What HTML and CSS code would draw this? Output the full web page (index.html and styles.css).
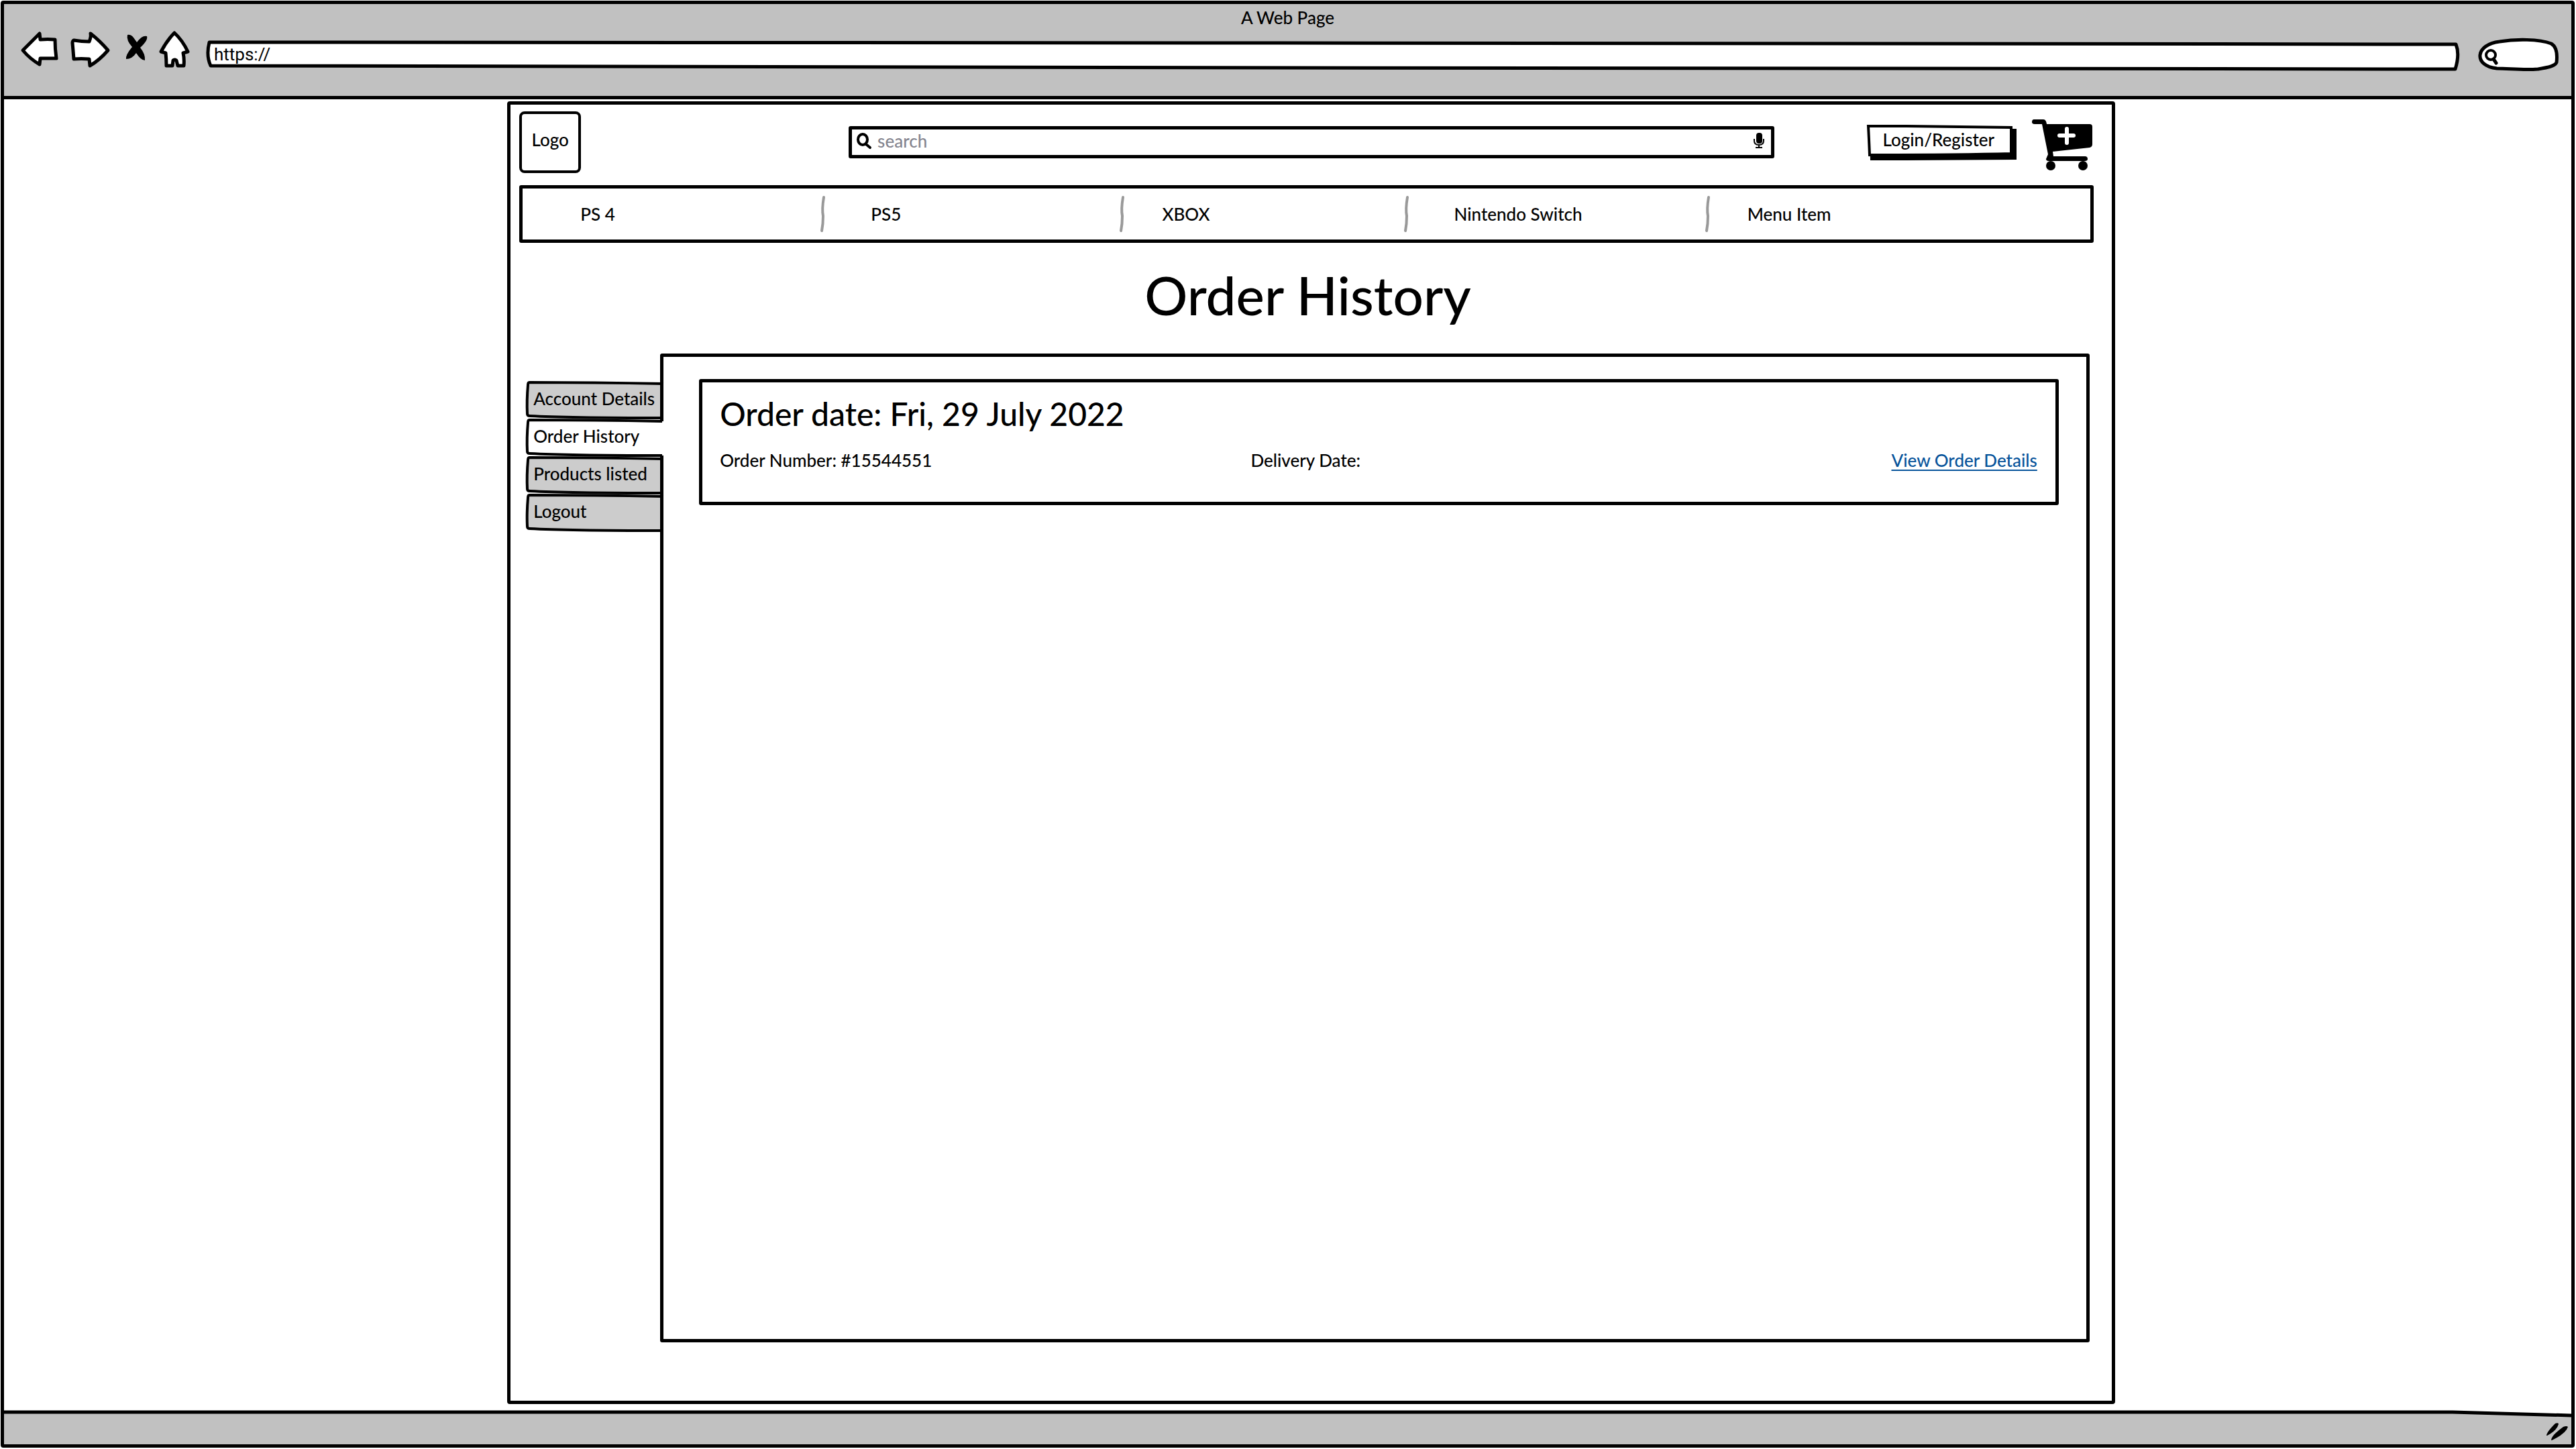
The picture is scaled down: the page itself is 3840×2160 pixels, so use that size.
FILE: index.html
```html
<!DOCTYPE html>
<html lang="en">
<head>
<meta charset="utf-8">
<title>Order History</title>
<meta name="viewport" content="width=device-width, initial-scale=1">
<link rel="stylesheet" href="styles.css">
</head>
<body>
<div class="browser">
  <header class="chrome">
    <p class="chrome-title">A Web Page</p>
    <div class="toolbar">
      <button class="tool" type="button" aria-label="Back">
        <svg width="62" height="62" viewBox="30 43 62 62"><path class="ink paper" d="M34 75 L59 50 L60 59 Q71 58 82 59 Q82 73 84 87 Q72 87 60 87 L59 96 Q45 88 34 75Z"/></svg>
      </button>
      <button class="tool" type="button" aria-label="Forward">
        <svg width="68" height="62" viewBox="104 43 68 62"><path class="ink paper" d="M110 60 Q122 62 133 62 Q136 55 135 50 Q149 61 161 75 Q148 90 134 98 L133 88 Q121 87 110 88 Q109 75 108 64 Q108 61 110 60Z"/></svg>
      </button>
      <button class="tool" type="button" aria-label="Stop">
        <svg width="40" height="62" viewBox="184 43 40 62"><path d="M190 52 Q195 51 199 56 L204 63 Q212 52 219 54 Q221 60 209 71 Q217 81 216 90 Q210 90 203 79 Q197 88 188 88 Q187 82 197 70 Q188 60 190 52Z"/></svg>
      </button>
      <button class="tool" type="button" aria-label="Home">
        <svg width="48" height="62" viewBox="236 43 48 62"><path class="ink paper" d="M260 49 Q272 60 280 77 L273 79 Q275 88 274 98 L265 98 L263 90 Q260 88 258 90 L257 98 L248 98 Q248 88 247 79 L240 77 Q249 60 260 49Z"/></svg>
      </button>
      <div class="address">
        <svg class="outline" viewBox="0 0 3358 46" preserveAspectRatio="none" aria-hidden="true"><path class="ink paper" d="M5 4 L1600 5 L3354 7 Q3360 22 3353 44 L1600 42 L7 39 Q0 24 5 4Z"/></svg>
        <input class="address-input" type="text" aria-label="Address" value="https://">
      </div>
      <button class="tool tool-search" type="button" aria-label="Search the web">
        <svg width="124" height="62" viewBox="3692 43 124 62"><path class="ink paper" d="M3722 102 C3686 98 3690 66 3726 62 C3750 58 3785 58 3803 65 C3812 70 3812 84 3811 93 C3809 99 3795 101 3783 103 C3762 105 3740 102 3722 102Z"/><circle class="ink thin" cx="3713" cy="82" r="7"/><path class="ink" d="M3717 88 L3721 94"/></svg>
      </button>
    </div>
  </header>

  <main class="viewport">
    <div class="page">
      <header class="site-header">
        <a class="logo" href="#">Logo</a>
        <form class="search" role="search">
          <svg class="search-icon" width="24" height="26" viewBox="0 0 24 26" aria-hidden="true"><ellipse cx="10" cy="11" rx="7" ry="8"/><path d="M15 18 L21 23"/></svg>
          <input class="search-input" type="search" placeholder="search" aria-label="search">
          <svg class="mic-icon" width="16" height="24" viewBox="0 0 16 24" aria-hidden="true"><rect x="4" y="0" width="9" height="16" rx="4"/><path d="M1 9 V12 Q1 18 8 18 Q15 18 15 12 V9 M8 18 V22 M3 22 H13"/></svg>
        </form>
        <button class="login" type="button">
          <svg class="outline" viewBox="0 0 224 52" preserveAspectRatio="none" aria-hidden="true"><path d="M5 6 H224 V52 L60 53 L6 53Z"/><path class="ink paper login-face" d="M3 2 L60 2 L216 4 L216 43 Q140 45 5 45 Q4 20 3 2Z"/></svg>
          <span class="login-label">Login/Register</span>
        </button>
        <a class="cart" href="#" aria-label="Shopping cart">
          <svg width="92" height="92" viewBox="3029 166 92 92"><path d="M3032 178 H3046 Q3050 178 3051 185 L3115 185 Q3119 185 3119 189 V215 Q3119 219 3115 220 L3060 226 L3061 233 H3108 Q3112 233 3112 237 Q3112 240 3108 240 H3054 Q3050 240 3050 237 L3053 230 L3044 185 H3033 Q3029 185 3029 182 Q3029 178 3032 178Z"/><circle cx="3057" cy="247" r="7"/><circle cx="3105" cy="247" r="7"/><path class="cart-plus" d="M3081 192 V213 M3070 202 H3091"/></svg>
        </a>
      </header>

      <nav aria-label="Shop">
        <ul class="menu">
          <li class="menu-item"><a class="menu-link" href="#">PS 4</a></li>
          <li class="menu-item"><svg class="divider" width="8" height="54" viewBox="0 0 8 54" aria-hidden="true"><path d="M6 2 Q3 20 5 30 Q5 42 3 52"/></svg><a class="menu-link" href="#">PS5</a></li>
          <li class="menu-item"><svg class="divider" width="8" height="54" viewBox="0 0 8 54" aria-hidden="true"><path d="M6 2 Q3 20 5 30 Q5 42 3 52"/></svg><a class="menu-link" href="#">XBOX</a></li>
          <li class="menu-item"><svg class="divider" width="8" height="54" viewBox="0 0 8 54" aria-hidden="true"><path d="M6 2 Q3 20 5 30 Q5 42 3 52"/></svg><a class="menu-link" href="#">Nintendo Switch</a></li>
          <li class="menu-item"><svg class="divider" width="8" height="54" viewBox="0 0 8 54" aria-hidden="true"><path d="M6 2 Q3 20 5 30 Q5 42 3 52"/></svg><a class="menu-link" href="#">Menu Item</a></li>
        </ul>
      </nav>

      <h1 class="title">Order History</h1>

      <div class="account">
        <nav aria-label="Account">
          <ul class="tabs">
            <li class="tab"><svg class="outline" viewBox="0 0 205 56" preserveAspectRatio="none" aria-hidden="true"><path d="M205 3 Q100 1 5 1 Q3 1 3 5 Q1 28 2 48 Q2 51 6 51 Q60 54 205 54"/></svg><a class="tab-link" href="#">Account Details</a></li>
            <li class="tab tab-active"><svg class="outline" viewBox="0 0 205 56" preserveAspectRatio="none" aria-hidden="true"><path class="tab-gap" d="M190 3 H206 V54 H190Z"/><path d="M203 3 Q100 1 5 1 Q3 1 3 5 Q1 28 2 48 Q2 51 6 51 Q60 54 203 54"/></svg><a class="tab-link" href="#" aria-current="page">Order History</a></li>
            <li class="tab"><svg class="outline" viewBox="0 0 205 56" preserveAspectRatio="none" aria-hidden="true"><path d="M205 3 Q100 1 5 1 Q3 1 3 5 Q1 28 2 48 Q2 51 6 51 Q60 54 205 54"/></svg><a class="tab-link" href="#">Products listed</a></li>
            <li class="tab"><svg class="outline" viewBox="0 0 205 56" preserveAspectRatio="none" aria-hidden="true"><path d="M205 3 Q100 1 5 1 Q3 1 3 5 Q1 28 2 48 Q2 51 6 51 Q60 54 205 54"/></svg><a class="tab-link" href="#">Logout</a></li>
          </ul>
        </nav>
        <section class="panel">
          <article class="order">
            <h2 class="order-date">Order date: Fri, 29 July 2022</h2>
            <div class="order-meta">
              <p>Order Number: #15544551</p>
              <p>Delivery Date:</p>
              <a class="order-link" href="#">View Order Details</a>
            </div>
          </article>
        </section>
      </div>
    </div>
  </main>

  <footer class="status">
    <svg class="outline" viewBox="0 0 3827 51" preserveAspectRatio="none" aria-hidden="true"><path class="status-fill" d="M0 2 L3650 2 L3827 7 V51 H0Z"/><path class="ink" d="M0 3 L1800 3 L3650 3 L3827 8"/></svg>
    <svg class="grip" width="34" height="28" viewBox="3796 2121 34 28" aria-hidden="true"><path d="M3797 2141 Q3797 2136 3810 2123 Q3815 2121 3815 2124 Q3812 2134 3798 2141Z"/><path d="M3804 2148 Q3804 2141 3822 2128 Q3827 2126 3829 2128 Q3826 2138 3805 2148Z"/></svg>
  </footer>
</div>
</body>
</html>
```
FILE: styles.css
```css
* {
  box-sizing: border-box;
}

body {
  margin: 0;
  background: #fff;
  color: #000;
  font: 500 26px/32px Lato, "Open Sans", sans-serif;
}

h1,
h2,
p,
ul {
  margin: 0;
  padding: 0;
  font-weight: 500;
}

ul {
  list-style: none;
}

a {
  color: inherit;
  text-decoration: none;
}

button,
input {
  margin: 0;
  padding: 0;
  border: 0;
  background: none;
  color: inherit;
  font: inherit;
}

svg {
  display: block;
  flex: none;
  overflow: visible;
}

/* hand-drawn strokes */
.ink {
  fill: none;
  stroke: #000;
  stroke-width: 5;
  stroke-linejoin: round;
  stroke-linecap: round;
}

.ink.thin {
  stroke-width: 4;
}

.ink.paper {
  fill: #fff;
}

.outline {
  position: absolute;
  inset: 0;
  width: 100%;
  height: 100%;
}

/* browser window */
.browser {
  display: flex;
  flex-direction: column;
  min-height: calc(100vh - 3px);
  margin: 1px 2px 2px 1px;
  border: 5px solid #000;
  border-radius: 4px;
}

.chrome {
  padding: 3px 0 38px;
  border-bottom: 5px solid #000;
  background: #c1c1c1;
}

.chrome-title {
  line-height: 34px;
  text-align: center;
}

.toolbar {
  display: flex;
  align-items: flex-end;
  gap: 12px;
  padding: 0 17px 0 24px;
}

.address {
  position: relative;
  flex: 1;
  height: 46px;
  margin: 0 15px 0 11px;
}

.address-input {
  position: relative;
  display: block;
  width: 100%;
  height: 42px;
  padding: 2px 12px 0;
  font: 400 26px/32px Roboto, sans-serif;
}

/* page frame */
.viewport {
  flex: 1;
  display: grid;
  grid-template-columns: 750fr 2396fr 680fr;
  padding: 3px 0 9px;
}

.page {
  grid-column: 2;
  display: flex;
  flex-direction: column;
  padding: 10px 27px 87px 13px;
  border: 5px solid #000;
  border-radius: 4px;
}

.site-header {
  display: flex;
  align-items: center;
}

.logo {
  display: flex;
  align-items: center;
  justify-content: center;
  width: 92px;
  height: 92px;
  padding-bottom: 8px;
  border: 4px solid #000;
  border-radius: 8px;
}

.search {
  flex: 1;
  display: flex;
  align-items: center;
  height: 48px;
  margin: 0 137px 0 17%;
  padding: 0 10px 4px 6px;
  border: 5px solid #000;
  border-radius: 3px;
}

.search-icon {
  fill: none;
  stroke: #000;
  stroke-width: 4;
  stroke-linecap: round;
}

.search-input {
  flex: 1;
  min-width: 0;
  padding-left: 8px;
  appearance: none;
  outline-offset: 4px;
}

.search-input::placeholder {
  color: #85858f;
  opacity: 1;
}

.mic-icon path {
  fill: none;
  stroke: #000;
  stroke-width: 2;
}

.login {
  position: relative;
  min-width: 224px;
  height: 52px;
  padding: 0 8px 8px 0;
  margin-right: 23px;
}

.login-face {
  stroke-width: 4;
  stroke-linejoin: miter;
}

.login-label {
  position: relative;
}

.cart-plus {
  stroke: #fff;
  stroke-width: 6;
  stroke-linecap: round;
}

.menu {
  display: grid;
  grid-template-columns: 447fr 446fr 423fr 449fr 571fr;
  height: 86px;
  margin-top: 18px;
  border: 5px solid #000;
  border-radius: 3px;
}

.menu-item {
  display: flex;
  align-items: center;
}

.divider {
  margin: 0 0 0 -4px;
  fill: none;
  stroke: #999;
  stroke-width: 4;
  stroke-linecap: round;
}

.menu-link {
  padding-left: 56px;
}

.menu-item:first-child .menu-link {
  padding-left: 86px;
}

.menu-item:nth-child(even) .menu-link {
  padding-left: 68px;
}

.title {
  padding-left: 4px;
  margin-top: 29px;
  font-size: 80px;
  line-height: 96px;
  text-align: center;
}

/* account area */
.account {
  flex: 1;
  display: flex;
  margin: 40px 6px 0 10px;
}

.tabs {
  width: 205px;
  margin-right: -5px;
  padding-top: 42px;
}

.tab {
  position: relative;
  height: 56px;
}

.tab .outline {
  fill: #ccc;
  stroke: #000;
  stroke-width: 4;
}

.tab-active {
  z-index: 2;
}

.tab-active .outline {
  fill: #fff;
}

.tab-gap {
  stroke: none;
}

.tab-link {
  position: relative;
  display: block;
  padding: 9px 0 0 11px;
  white-space: nowrap;
}

.panel {
  position: relative;
  z-index: 1;
  flex: 1;
  padding: 33px 41px 33px 53px;
  border: 5px solid #000;
  border-radius: 3px;
}

.order {
  padding: 18px 27px 46px 26px;
  border: 5px solid #000;
  border-radius: 3px;
}

.order-date {
  font-size: 48px;
  line-height: 58px;
}

.order-meta {
  display: grid;
  grid-template-columns: 791fr 586fr 586fr;
  margin-top: 24px;
}

.order-link {
  justify-self: end;
  color: #07549b;
  text-decoration: underline;
  text-decoration-thickness: 2px;
  text-underline-offset: 4px;
}

/* status bar */
.status {
  position: relative;
  display: flex;
  justify-content: flex-end;
  align-items: flex-end;
  height: 51px;
  padding: 0 4px 5px 0;
}

.status-fill {
  fill: #c1c1c1;
}

.grip {
  position: relative;
}
```
